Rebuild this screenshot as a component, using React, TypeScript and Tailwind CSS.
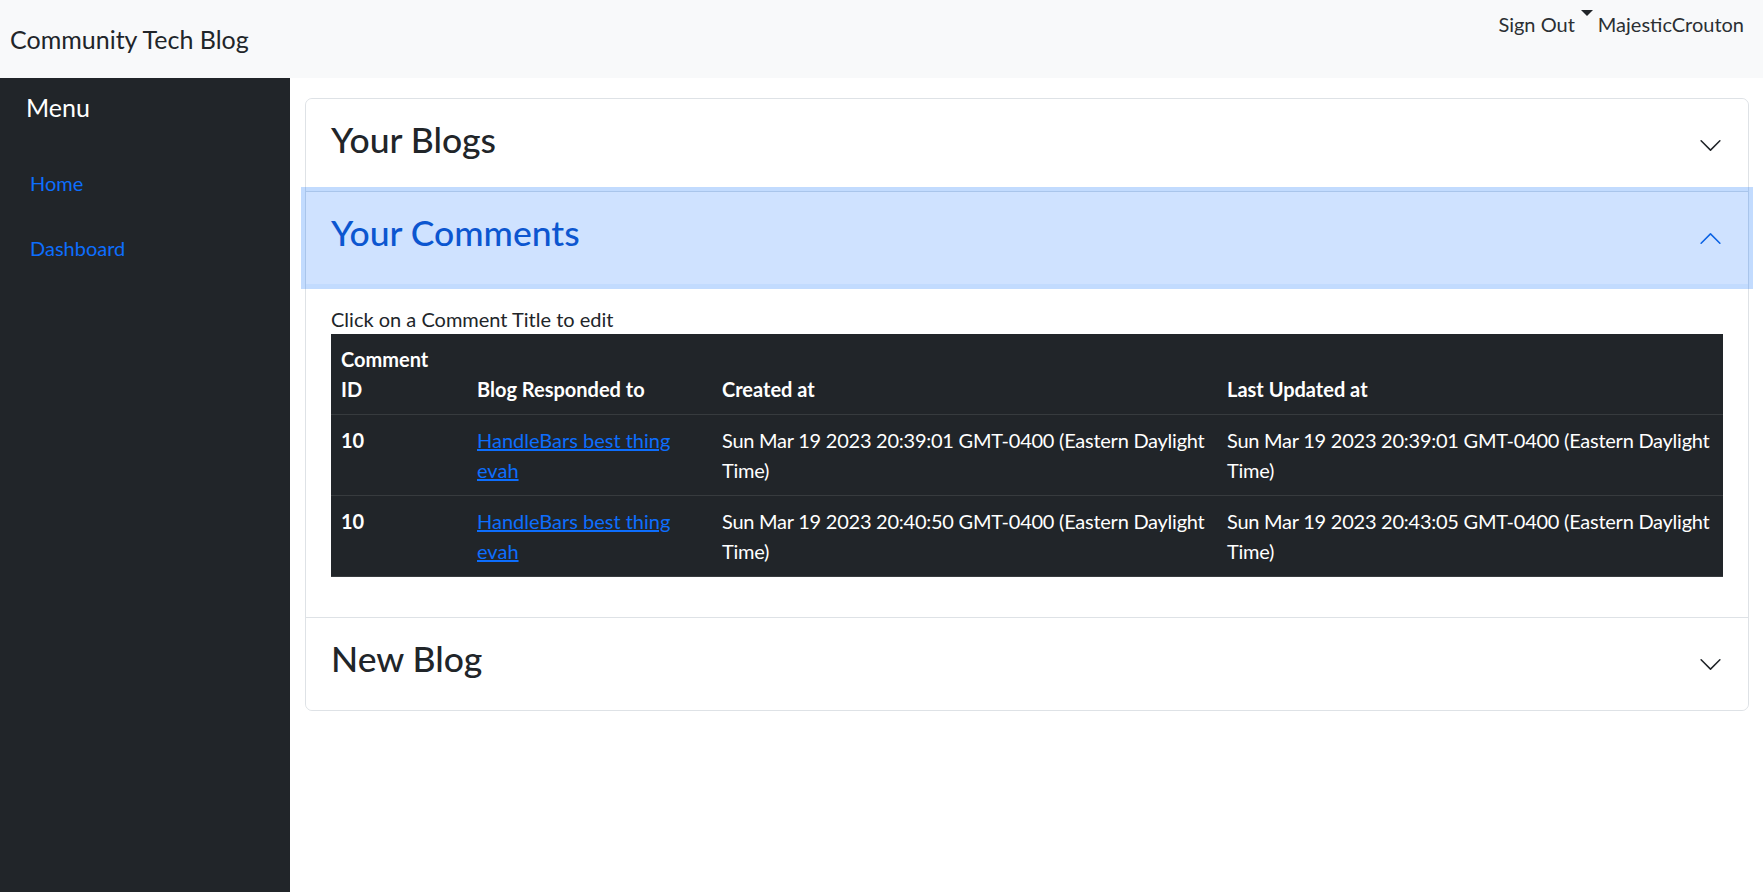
import { useState } from 'react';

type CommentRow = {
  id: number;
  blog: string;
  created: string;
  updated: string;
};

const comments: CommentRow[] = [
  {
    id: 10,
    blog: 'HandleBars best thing evah',
    created: 'Sun Mar 19 2023 20:39:01 GMT-0400 (Eastern Daylight',
    updated: 'Sun Mar 19 2023 20:39:01 GMT-0400 (Eastern Daylight',
  },
  {
    id: 10,
    blog: 'HandleBars best thing evah',
    created: 'Sun Mar 19 2023 20:40:50 GMT-0400 (Eastern Daylight',
    updated: 'Sun Mar 19 2023 20:43:05 GMT-0400 (Eastern Daylight',
  },
];

function Chevron({ open }: { open: boolean }) {
  return (
    <svg
      viewBox="0 0 16 16"
      className={open ? 'h-[25px] w-[25px] shrink-0 rotate-180 fill-[#0c63e4]' : 'h-[25px] w-[25px] shrink-0 fill-[#212529]'}
    >
      <path
        fillRule="evenodd"
        d="M1.646 4.646a.5.5 0 0 1 .708 0L8 10.293l5.646-5.647a.5.5 0 0 1 .708.708l-6 6a.5.5 0 0 1-.708 0l-6-6a.5.5 0 0 1 0-.708z"
      />
    </svg>
  );
}

function AccordionHeader({ title, open, onClick }: { title: string; open: boolean; onClick: () => void }) {
  return (
    <button
      onClick={onClick}
      className={
        open
          ? 'relative z-10 flex w-full items-center justify-between bg-[#cfe2ff] px-[25px] py-[20px] text-left text-[#0c56d0] shadow-[0_0_0_5px_rgba(13,110,253,0.25)]'
          : 'flex w-full items-center justify-between bg-white px-[25px] py-[20px] text-left text-[#212529]'
      }
    >
      <h3 className="mb-[10px] text-[35.5px] leading-[42px] font-medium">{title}</h3>
      <Chevron open={open} />
    </button>
  );
}

export default function App() {
  const [openSection, setOpenSection] = useState<string | null>('comments');

  const toggle = (name: string) => setOpenSection(openSection === name ? null : name);

  return (
    <div className="flex h-screen flex-col bg-white font-['Lato',sans-serif] text-[20px] leading-[30px] text-[#212529]">
      {/* Navbar */}
      <nav className="flex h-[78px] shrink-0 items-start justify-between bg-[#f8f9fa]">
        <a className="mt-[21px] ml-[10px] text-[25px] leading-[36px] text-[#212529]">Community Tech Blog</a>
        <div className="mt-[9px] mr-[19px] flex items-start text-[#2b2f33]">
          <span>Sign Out</span>
          <span className="mt-[1px] ml-[6px] mr-[5px] h-0 w-0 border-x-[6px] border-t-[6px] border-x-transparent border-t-[#212529]"></span>
          <span>MajesticCrouton</span>
        </div>
      </nav>

      <div className="flex min-h-0 flex-1">
        {/* Sidebar */}
        <aside className="w-[290px] shrink-0 bg-[#212529] pt-[14px]">
          <h5 className="pl-[26px] text-[25px] leading-[30px] text-white">Menu</h5>
          <ul className="mt-[46px] pl-[30px]">
            <li className="h-[65px]">
              <a href="#" className="text-[#0d6efd]">Home</a>
            </li>
            <li className="h-[65px]">
              <a href="#" className="text-[#0d6efd]">Dashboard</a>
            </li>
          </ul>
        </aside>

        {/* Main */}
        <main className="flex-1 overflow-auto pt-[20px] pr-[14px] pl-[15px]">
          <div className="rounded-[7px] border border-[#dee2e6] bg-white">
            <div className="overflow-hidden rounded-t-[7px]">
              <AccordionHeader title="Your Blogs" open={openSection === 'blogs'} onClick={() => toggle('blogs')} />
            </div>

            <div className="border-t border-[#dee2e6]">
              <AccordionHeader title="Your Comments" open={openSection === 'comments'} onClick={() => toggle('comments')} />
              {openSection === 'comments' && (
                <div className="px-[25px] py-[20px]">
                  <p>Click on a Comment Title to edit</p>
                  <table className="mb-[20px] w-full table-fixed border-collapse bg-[#212529] text-left text-white">
                    <colgroup>
                      <col className="w-[136px]" />
                      <col className="w-[245px]" />
                      <col className="w-[505px]" />
                      <col />
                    </colgroup>
                    <thead>
                      <tr className="border-b border-[#373b3e] align-bottom">
                        <th className="p-[10px] font-bold">
                          Comment
                          <br />
                          ID
                        </th>
                        <th className="p-[10px] font-bold">Blog Responded to</th>
                        <th className="p-[10px] font-bold">Created at</th>
                        <th className="p-[10px] font-bold">Last Updated at</th>
                      </tr>
                    </thead>
                    <tbody>
                      {comments.map((c, i) => (
                        <tr key={i} className="border-b border-[#373b3e] align-top">
                          <td className="p-[10px] font-bold">{c.id}</td>
                          <td className="p-[10px]">
                            <a href="#" className="text-[#0d6efd] underline">{c.blog}</a>
                          </td>
                          <td className="p-[10px] tracking-[-0.25px] whitespace-nowrap">
                            {c.created}
                            <br />
                            Time)
                          </td>
                          <td className="p-[10px] tracking-[-0.25px] whitespace-nowrap">
                            {c.updated}
                            <br />
                            Time)
                          </td>
                        </tr>
                      ))}
                    </tbody>
                  </table>
                </div>
              )}
            </div>

            <div className="overflow-hidden rounded-b-[7px] border-t border-[#dee2e6]">
              <AccordionHeader title="New Blog" open={openSection === 'new'} onClick={() => toggle('new')} />
            </div>
          </div>
        </main>
      </div>
    </div>
  );
}
